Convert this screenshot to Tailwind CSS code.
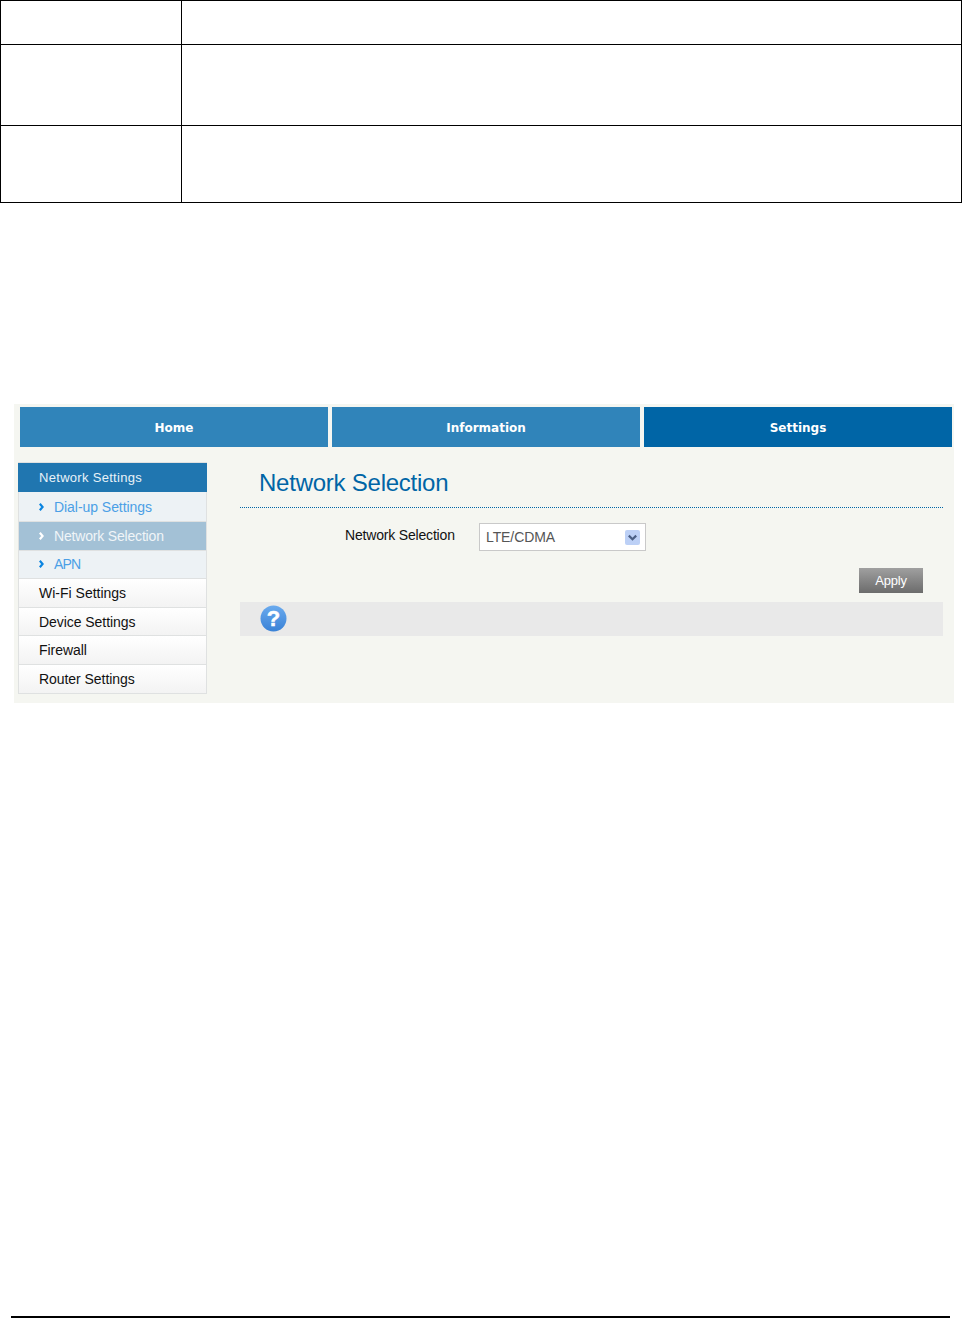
<!DOCTYPE html>
<html lang="en">
<head>
    <meta charset="UTF-8">
    <title>Network Selection</title>
    <script src="https://cdn.jsdelivr.net/npm/@tailwindcss/browser@4"></script>
</head>
<body class="bg-white font-['Liberation_Sans',Arial,sans-serif]">
    <div class="relative h-[1318px] w-[962px] overflow-hidden">

        <!-- Empty table at the top of the page -->
        <div class="grid h-[203px] w-[962px] grid-cols-[181px_1fr] grid-rows-[44px_81px_77px] border-t border-l border-black">
            <div class="border-r border-b border-black"></div>
            <div class="border-r border-b border-black"></div>
            <div class="border-r border-b border-black"></div>
            <div class="border-r border-b border-black"></div>
            <div class="border-r border-b border-black"></div>
            <div class="border-r border-b border-black"></div>
        </div>

        <!-- Router screenshot -->
        <div class="mt-[201px] ml-[14px] h-[299px] w-[940px] bg-[#f5f6f1] pt-[3px]">
            <!-- Tabs -->
            <div class="ml-[6px] flex h-10 gap-1 font-['DejaVu_Sans',sans-serif] text-[12px] font-bold text-white">
                <div class="flex w-[308px] items-center justify-center bg-[#3084ba] pt-px">Home</div>
                <div class="flex w-[308px] items-center justify-center bg-[#3084ba] pt-px">Information</div>
                <div class="flex w-[308px] items-center justify-center bg-[#0065a6] pt-px">Settings</div>
            </div>

            <div class="mt-4 flex">
                <!-- Sidebar -->
                <div class="ml-1 w-[189px] text-[14px] leading-none">
                    <div class="flex h-[29px] items-center bg-[#2076b0] pl-[21px] text-[13px] tracking-[0.3px] text-[#e8f2f8] shadow-[0_-1px_0_#dfe1e1]">Network Settings</div>
                    <div class="border-x border-[#dfe1e1]">
                        <div class="flex h-[30px] items-center gap-[10px] border-b border-[#dfe1e1] bg-[#edf2f5] pl-5 text-[#4b9fe6]">
                            <svg class="h-2 w-[5px]" viewBox="0 0 5 8"><path d="M0.8 0.8 L3.6 4 L0.8 7.2" fill="none" stroke="#0a84e0" stroke-width="2.2"/></svg>
                            <span class="tracking-[-0.05px]">Dial-up Settings</span>
                        </div>
                        <div class="flex h-[29px] items-center gap-[10px] border-b border-[#dfe1e1] bg-[#a3c1d6] pl-5 text-[#f0f5f8]">
                            <svg class="h-2 w-[5px]" viewBox="0 0 5 8"><path d="M0.8 0.8 L3.6 4 L0.8 7.2" fill="none" stroke="#ffffff" stroke-width="2.2"/></svg>
                            <span class="tracking-[-0.18px]">Network Selection</span>
                        </div>
                        <div class="flex h-[28px] items-center gap-[10px] border-b border-[#dfe1e1] bg-[#edf2f5] pb-[2px] pl-5 text-[#4b9fe6]">
                            <svg class="h-2 w-[5px]" viewBox="0 0 5 8"><path d="M0.8 0.8 L3.6 4 L0.8 7.2" fill="none" stroke="#0a84e0" stroke-width="2.2"/></svg>
                            <span class="tracking-[-0.9px]">APN</span>
                        </div>
                        <div class="flex h-[29px] items-center border-b border-[#dfe1e1] bg-gradient-to-b from-white to-[#f3f3f3] pl-5 text-[#111111]">Wi-Fi Settings</div>
                        <div class="flex h-[28px] items-center border-b border-[#dfe1e1] bg-gradient-to-b from-white to-[#f3f3f3] pl-5 tracking-[-0.05px] text-[#111111]">Device Settings</div>
                        <div class="flex h-[29px] items-center border-b border-[#dfe1e1] bg-gradient-to-b from-white to-[#f3f3f3] pl-5 tracking-[-0.05px] text-[#111111]">Firewall</div>
                        <div class="flex h-[29px] items-center border-b border-[#dfe1e1] bg-gradient-to-b from-white to-[#f3f3f3] pl-5 tracking-[-0.05px] text-[#111111]">Router Settings</div>
                    </div>
                </div>

                <!-- Content -->
                <div class="ml-[33px] w-[703px]">
                    <div class="h-[45px] border-b border-dotted border-[#0065a6] pt-[6px] pl-[19px] text-[24px] leading-7 tracking-[-0.24px] text-[#0065a6]">Network Selection</div>
                    <div class="mt-[15px] flex h-7 items-center">
                        <div class="ml-[105px] w-[134px] pb-[4px] text-[14px] tracking-[-0.18px] text-[#111111]">Network Selection</div>
                        <div class="flex h-7 w-[167px] items-center justify-between border border-[#c9c9c9] bg-white pr-[5px] pl-[6px] text-[14px] tracking-[-0.1px] text-[#555555]">
                            <span>LTE/CDMA</span>
                            <svg class="h-[15px] w-[15px]" viewBox="0 0 15 15">
                                <rect width="15" height="15" rx="2" fill="#bcd0f6"/>
                                <path d="M3.8 5.6 L7.5 9.2 L11.2 5.6" fill="none" stroke="#4a5f85" stroke-width="2.2"/>
                            </svg>
                        </div>
                    </div>
                    <div class="mt-[17px] flex justify-end pr-5">
                        <div class="flex h-[25px] w-16 items-center justify-center bg-gradient-to-b from-[#a0a0a0] to-[#6c6c6c] text-[13px] font-light tracking-[-0.2px] text-white">Apply</div>
                    </div>
                    <div class="mt-[9px] flex h-[34px] items-center bg-[#e9e9e9] pl-5">
                        <svg class="mb-px h-[27px] w-[27px]" viewBox="0 0 27 27">
                            <defs>
                                <linearGradient id="help-blue" x1="0" y1="0" x2="0" y2="1">
                                    <stop offset="0" stop-color="#6aaaee"/>
                                    <stop offset="1" stop-color="#3a82d6"/>
                                </linearGradient>
                            </defs>
                            <circle cx="13.5" cy="13.5" r="13" fill="url(#help-blue)"/>
                            <text x="13.5" y="21" text-anchor="middle" font-family="Liberation Sans" font-weight="700" font-size="22" stroke="#ffffff" stroke-width="0.5" fill="#ffffff">?</text>
                        </svg>
                    </div>
                </div>
            </div>
        </div>

        <!-- Footer rule -->
        <div class="mt-[613px] ml-[11px] h-[2px] w-[939px] bg-black"></div>
    </div>
</body>
</html>
